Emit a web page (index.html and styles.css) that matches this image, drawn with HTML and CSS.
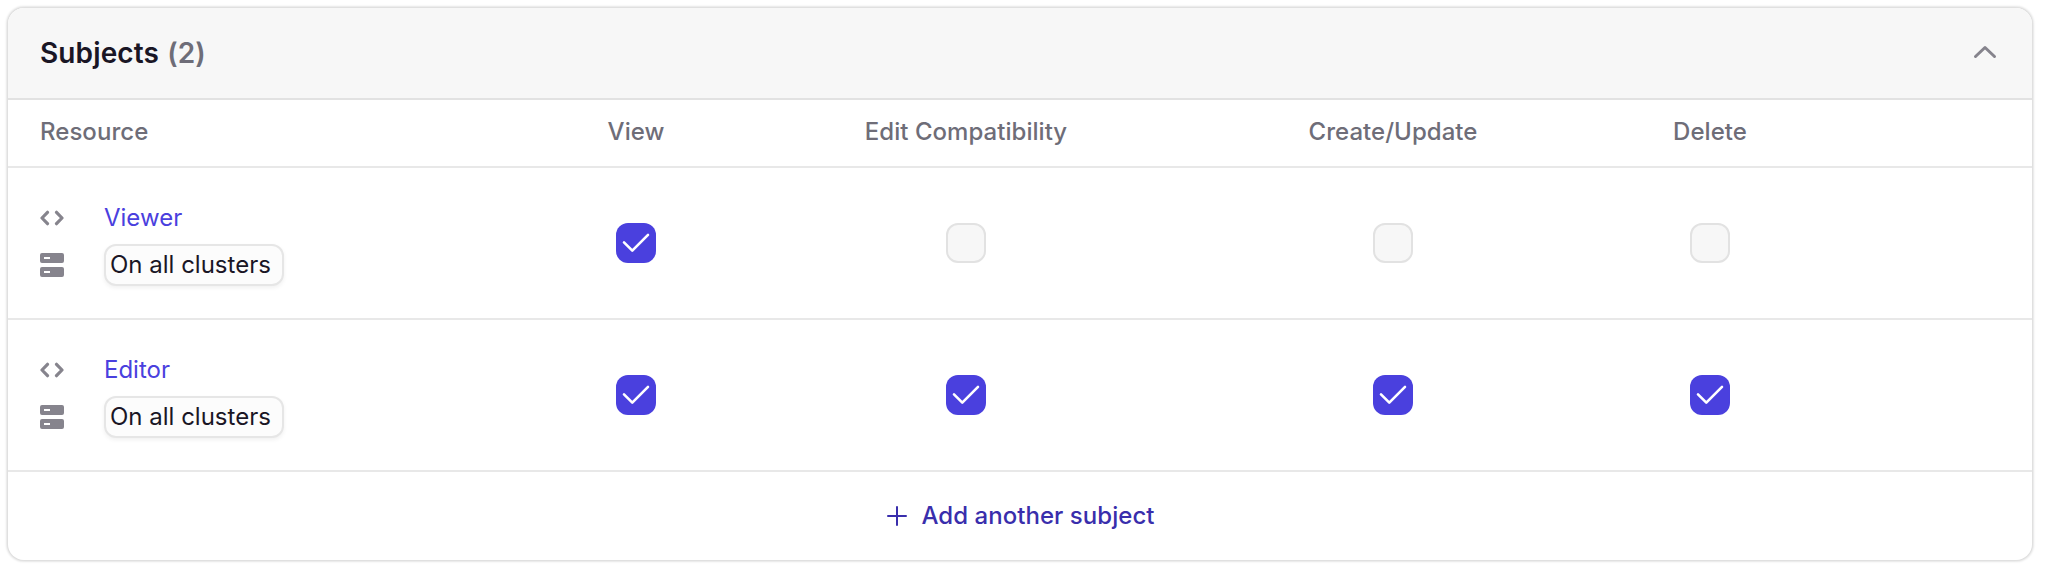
FILE: index.html
```html
<!DOCTYPE html>
<html lang="en">
<head>
<meta charset="utf-8">
<title>Subjects</title>
<link rel="stylesheet" href="styles.css">
</head>
<body>
<svg class="sprite" aria-hidden="true">
  <symbol id="code" viewBox="0 0 24 24"><path d="M7.500 6.300 2 12l5.500 5.700M16.500 6.300 22 12l-5.500 5.700" fill="none" stroke="currentColor" stroke-width="3.200" stroke-linecap="round" stroke-linejoin="round"/></symbol>
  <symbol id="server" viewBox="0 0 24 24"><path fill="currentColor" fill-rule="evenodd" d="M2 0h20a2 2 0 0 1 2 2v6a2 2 0 0 1-2 2H2a2 2 0 0 1-2-2V2a2 2 0 0 1 2-2zM4 4v2h6V4zM2 14h20a2 2 0 0 1 2 2v6a2 2 0 0 1-2 2H2a2 2 0 0 1-2-2v-6a2 2 0 0 1 2-2zM4 18v2h6v-2z"/></symbol>
  <symbol id="check" viewBox="0 0 40 40"><path d="m8 19.300 8.300 8.300L32 11.900" fill="none" stroke="currentColor" stroke-width="2.600" stroke-linecap="round" stroke-linejoin="round"/></symbol>
</svg>
<section class="card">
  <header class="card-header">
    <h2 class="title">Subjects <span class="count">(2)</span></h2>
    <svg class="chevron" viewBox="0 0 24 16"><path d="M2.500 12.500 12 3.500 21.500 12.500" fill="none" stroke="currentColor" stroke-width="3" stroke-linecap="round" stroke-linejoin="round"/></svg>
  </header>
  <div class="row head">
    <div class="first">Resource</div>
    <div>View</div>
    <div>Edit Compatibility</div>
    <div>Create/Update</div>
    <div>Delete</div>
  </div>
  <div class="row item">
    <div class="first resource">
      <svg class="icon"><use href="#code"/></svg><a class="link">Viewer</a>
      <svg class="icon"><use href="#server"/></svg><span class="tag">On all clusters</span>
    </div>
    <div><span class="box checked"><svg class="tick"><use href="#check"/></svg></span></div>
    <div><span class="box"></span></div>
    <div><span class="box"></span></div>
    <div><span class="box"></span></div>
  </div>
  <div class="row item">
    <div class="first resource">
      <svg class="icon"><use href="#code"/></svg><a class="link">Editor</a>
      <svg class="icon"><use href="#server"/></svg><span class="tag">On all clusters</span>
    </div>
    <div><span class="box checked"><svg class="tick"><use href="#check"/></svg></span></div>
    <div><span class="box checked"><svg class="tick"><use href="#check"/></svg></span></div>
    <div><span class="box checked"><svg class="tick"><use href="#check"/></svg></span></div>
    <div><span class="box checked"><svg class="tick"><use href="#check"/></svg></span></div>
  </div>
  <footer class="card-footer">
    <svg class="plus" viewBox="0 0 20 20"><path d="M10 1v18M1 10h18" fill="none" stroke="currentColor" stroke-width="2" stroke-linecap="round"/></svg>
    <span class="add">Add another subject</span>
  </footer>
</section>
</body>
</html>
```
FILE: styles.css
```css
* { box-sizing: border-box; }
body { margin: 0; padding: 8px; background: #fff; font-family: Inter, sans-serif; font-size: 24px; line-height: 32px; color: #1a1625; }
.sprite { display: none; }
.card { width: 2024px; border-radius: 16px; background: #fff; box-shadow: 0 0 0 1px #e0e0e0, 0 0 2px 2px #e6e6e6; overflow: hidden; }
.card-header { height: 92px; padding: 0 35px 2px 32px; display: flex; align-items: center; justify-content: space-between; background: #f7f7f7; border-bottom: 2px solid #e2e2e2; }
.title { margin: 0; padding-top: 2px; font-size: 28px; font-weight: 600; line-height: 40px; letter-spacing: .12px; }
.count { margin-left: 1px; color: #6e6d78; }
.chevron { width: 24px; height: 16px; color: #86848d; }
.row { display: grid; grid-template-columns: 500px 256px 404px 450px 184px; border-bottom: 2px solid #e8e8e8; align-items: center; justify-items: center; }
.first { justify-self: start; padding-left: 32px; }
.head { height: 68px; padding-bottom: 2px; font-weight: 500; letter-spacing: .04px; color: #6e6d78; }
.item { height: 152px; }
.resource { padding-top: 2px; display: grid; grid-template-columns: 24px auto; column-gap: 40px; row-gap: 10px; align-items: center; }
.icon { width: 24px; height: 24px; display: block; color: #86848d; }
.link { color: #4a40de; }
.tag { height: 42px; padding: 0 11px 0 4px; display: flex; align-items: center; border: 2px solid #e6e6e6; border-radius: 12px; background: #fcfcfc; box-shadow: 0 2px 4px rgba(0, 0, 0, .06); }
.box { display: block; width: 40px; height: 40px; border: 2px solid #e2e2e2; border-radius: 12px; background: #f7f7f7; }
.checked { border: 0; background: #4a40de; color: #fff; }
.tick { display: block; width: 40px; height: 40px; }
.card-footer { height: 88px; padding-left: 2px; display: flex; align-items: center; justify-content: center; gap: 14px; color: #392eac; }
.plus { width: 20px; height: 20px; }
.add { font-weight: 500; letter-spacing: .05px; }
```
